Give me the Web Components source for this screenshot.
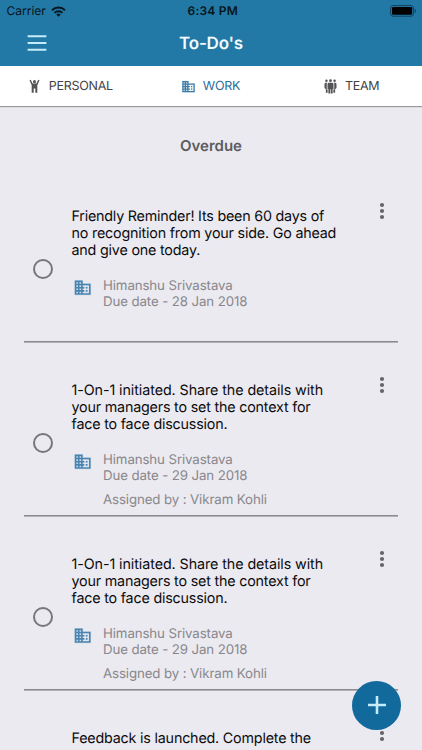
<!DOCTYPE html>
<html lang="en">
<head>
<meta charset="UTF-8">
<meta name="viewport" content="width=device-width, initial-scale=1">
<title>To-Do's</title>
<style>
    html, body {
        margin: 0;
        height: 100%;
        overflow: hidden;
    }
    body {
        font-family: Inter, "Liberation Sans", sans-serif;
        text-rendering: geometricPrecision;
        background: #ebeaf0;
    }
</style>
</head>
<body>
<todo-app></todo-app>

<script>
const todos = [
    { lines: ["Friendly Reminder! Its been 60 days of", "no recognition from your side. Go ahead", "and give one today."], tracking: "-0.21px", owner: "Himanshu Srivastava", due: "28 Jan 2018" },
    { lines: ["1-On-1 initiated. Share the details with", "your managers to set the context for", "face to face discussion."], tracking: "-0.08px", owner: "Himanshu Srivastava", due: "29 Jan 2018", by: "Vikram Kohli" },
    { lines: ["1-On-1 initiated. Share the details with", "your managers to set the context for", "face to face discussion."], tracking: "-0.08px", owner: "Himanshu Srivastava", due: "29 Jan 2018", by: "Vikram Kohli" },
    { lines: ["Feedback is launched. Complete the"], tracking: "-0.19px" }
];

const icons = {
    work: `<path stroke="currentColor" stroke-width="0.2" d="M12 7V3H2v18h20V7H12zM6 19H4v-2h2v2zm0-4H4v-2h2v2zm0-4H4V9h2v2zm0-4H4V5h2v2zm4 12H8v-2h2v2zm0-4H8v-2h2v2zm0-4H8V9h2v2zm0-4H8V5h2v2zm10 12h-8v-2h2v-2h-2v-2h2v-2h-2V9h8v10zm-2-8h-2v2h2v-2zm0 4h-2v2h2v-2z"/>`,
    personal: `<circle cx="12" cy="4.2" r="2.4"/><path d="M4 2 6 1 9 7h6l3-6 2 1-3.5 7.8V22h-3.2v-7h-2.600v7H7.500V9.800z"/>`,
    team: `<circle cx="5.5" cy="2.8" r="2"/><circle cx="12" cy="2.6" r="2.2"/><circle cx="18.5" cy="2.8" r="2"/><path d="M8.6 5.8h6.8l1.400 1.600v8.400h-1.400V23h-2.900v-6.500h-1V23H8.600v-7.200H7.200V7.400zM3.800 5.800h3L6 7.400v9.200h1.400V22H4.600v-5.500L2.400 14.500V7.400zM20.200 5.800h-3l.8 1.600v9.200h-1.400V22h2.800v-5.500l2.200-2V7.400z"/>`,
    menu: `<path d="M3 4.5h18v2H3zm0 6.500h18v2H3zm0 6.500h18v2H3z"/>`,
    more: `<circle cx="12" cy="4.8" r="2.5"/><circle cx="12" cy="12" r="2.5"/><circle cx="12" cy="19.2" r="2.5"/>`,
    add: `<path d="M10.7 3h2.600v7.700H21v2.600h-7.700V21h-2.600v-7.700H3v-2.600h7.700z"/>`
};

class AppIcon extends HTMLElement {
    connectedCallback() {
        this.attachShadow({ mode: 'open' }).innerHTML = `
            <style>
                :host {
                    display: block;
                    flex: none;
                    width: var(--size, 20px);
                    height: var(--size, 20px);
                }
                svg {
                    display: block;
                    width: 100%;
                    height: 100%;
                    fill: currentColor;
                }
            </style>
            <svg viewBox="0 0 24 24">${icons[this.getAttribute('name')]}</svg>
        `;
    }
}

class StatusBar extends HTMLElement {
    connectedCallback() {
        this.attachShadow({ mode: 'open' }).innerHTML = `
            <style>
                :host {
                    display: grid;
                    grid-template-columns: 1fr auto 1fr;
                    align-items: center;
                    height: 22px;
                    padding: 0 5px 0 6.5px;
                    font-size: 12px;
                    line-height: 22px;
                    color: #06141c;
                }
                .left { display: flex; align-items: center; gap: 5px; }
                .time { font-weight: 600; letter-spacing: 0.2px; transform: translateX(1px); }
                .battery { justify-self: end; margin-top: -1px; }
                svg { display: block; }
            </style>
            <div class="left">
                <span>Carrier</span>
                <svg width="15" height="11" viewBox="0 0 15 11">
                    <g fill="none" stroke="#06141c" stroke-width="2">
                        <path d="M1 4.2a9.3 9.3 0 0 1 13 0"/>
                        <path d="M3.5 6.9a5.7 5.7 0 0 1 8 0"/>
                    </g>
                    <path fill="#06141c" d="M5.3 8.5a3.1 3.1 0 0 1 4.4 0L7.5 10.8z"/>
                </svg>
            </div>
            <span class="time">6:34 PM</span>
            <svg class="battery" width="27" height="12" viewBox="0 0 27 12">
                <rect x="0.6" y="0.6" width="23" height="10.6" rx="2.5" fill="none" stroke="#0d435e"/>
                <rect x="2" y="2" width="20.2" height="7.8" rx="1.2" fill="#000"/>
                <path d="M24.8 4v4a2.2 2.2 0 0 0 0-4z" fill="#0d435e"/>
            </svg>
        `;
    }
}

class AppHeader extends HTMLElement {
    connectedCallback() {
        this.attachShadow({ mode: 'open' }).innerHTML = `
            <style>
                :host {
                    display: block;
                    height: 66px;
                    background: #2279a6;
                }
                .bar {
                    display: grid;
                    grid-template-columns: 1fr auto 1fr;
                    align-items: center;
                    height: 42px;
                    padding: 0 24.5px;
                }
                app-icon { --size: 25px; color: #c5ecf9; transform: translate(-0.5px, -0.5px); }
                h1 {
                    margin: 2px 0 0;
                    font-size: 17px;
                    font-weight: 600;
                    letter-spacing: -0.2px;
                    color: #f4fbff;
                }
            </style>
            <status-bar></status-bar>
            <div class="bar">
                <app-icon name="menu"></app-icon>
                <h1><slot></slot></h1>
            </div>
        `;
    }
}

class TabBar extends HTMLElement {
    connectedCallback() {
        this.attachShadow({ mode: 'open' }).innerHTML = `
            <style>
                :host {
                    display: grid;
                    grid-template-columns: repeat(3, 1fr);
                    box-sizing: border-box;
                    height: 40px;
                    background: #fff;
                    box-shadow: 0 1px 1px rgba(0, 0, 0, 0.35);
                    clip-path: inset(0 0 -2px 0);
                }
            </style>
            <slot></slot>
        `;
    }
}

class TabItem extends HTMLElement {
    connectedCallback() {
        this.attachShadow({ mode: 'open' }).innerHTML = `
            <style>
                :host {
                    display: flex;
                    align-items: center;
                    justify-content: center;
                    gap: 7px;
                    font-size: 12.5px;
                    letter-spacing: -0.25px;
                    color: #424244;
                }
                :host([active]) { color: #2a6f9e; }
                app-icon { --size: 15px; opacity: 0.9; }
                span { margin: 1px 1px 0 0; }
            </style>
            <app-icon name="${this.getAttribute('icon')}"></app-icon>
            <span><slot></slot></span>
        `;
    }
}

class TodoItem extends HTMLElement {
    set data(todo) {
        this.attachShadow({ mode: 'open' }).innerHTML = `
            <style>
                :host {
                    display: grid;
                    grid-template-columns: 47.5px 1fr 33px;
                    box-sizing: border-box;
                    height: 174px;
                    margin: 0 24px;
                    box-shadow: inset 0 -1px #8b8a90, 0 0.6px #8b8a90;
                }
                .check {
                    box-sizing: border-box;
                    width: 20px;
                    height: 20px;
                    margin: 91px 0 0 9px;
                    border: 2px solid #77767b;
                    border-radius: 50%;
                }
                .title {
                    margin-top: 39.5px;
                    font-size: 14.3px;
                    line-height: 17.2px;
                    letter-spacing: -0.19px;
                    color: #0b0b0d;
                    white-space: nowrap;
                }
                .title div { height: 17.2px; }
                .title div:first-child { letter-spacing: ${todo.tracking}; }
                .meta {
                    display: flex;
                    gap: 11px;
                    margin: 20.2px 0 0 1.5px;
                    font-size: 13.3px;
                    line-height: 15.5px;
                    letter-spacing: -0.12px;
                    color: #88878c;
                    white-space: nowrap;
                }
                .meta app-icon { --size: 19px; color: #4a86b2; transform: translate(0.2px, -0.8px); }
                .by { margin-top: 9px; }
                .more { --size: 20px; color: #666569; margin: 33px 0 0 7px; }
            </style>
            <div class="check"></div>
            <div>
                <div class="title">${todo.lines.map(line => `<div>${line}</div>`).join('')}</div>
                ${todo.owner ? `
                <div class="meta">
                    <app-icon name="work"></app-icon>
                    <div>
                        <div>${todo.owner}</div>
                        <div>Due date - ${todo.due}</div>
                        ${todo.by ? `<div class="by">Assigned by : ${todo.by}</div>` : ''}
                    </div>
                </div>` : ''}
            </div>
            <app-icon class="more" name="more"></app-icon>
        `;
    }
}

class TodoApp extends HTMLElement {
    connectedCallback() {
        this.attachShadow({ mode: 'open' }).innerHTML = `
            <style>
                :host {
                    display: flex;
                    flex-direction: column;
                    position: relative;
                    height: 100vh;
                    overflow: hidden;
                }
                app-header, tab-bar, h2, todo-item { flex: none; }
                h2 {
                    height: 62px;
                    margin: 0;
                    font-size: 15px;
                    font-weight: 600;
                    line-height: 80px;
                    text-align: center;
                    color: #5c5b60;
                }
                .fab {
                    position: absolute;
                    right: 21px;
                    bottom: 20.5px;
                    display: flex;
                    align-items: center;
                    justify-content: center;
                    width: 49px;
                    height: 49px;
                    padding: 0;
                    border: none;
                    border-radius: 50%;
                    background: #12699c;
                    color: #c5ecf9;
                }
                .fab app-icon { --size: 24px; }
            </style>
            <app-header>To-Do's</app-header>
            <tab-bar>
                <tab-item icon="personal">PERSONAL</tab-item>
                <tab-item icon="work" active>WORK</tab-item>
                <tab-item icon="team">TEAM</tab-item>
            </tab-bar>
            <h2>Overdue</h2>
            <button class="fab" aria-label="Add"><app-icon name="add"></app-icon></button>
        `;
        const fab = this.shadowRoot.querySelector('.fab');
        todos.forEach(todo => {
            const item = document.createElement('todo-item');
            item.data = todo;
            fab.before(item);
        });
    }
}

customElements.define('app-icon', AppIcon);
customElements.define('status-bar', StatusBar);
customElements.define('app-header', AppHeader);
customElements.define('tab-bar', TabBar);
customElements.define('tab-item', TabItem);
customElements.define('todo-item', TodoItem);
customElements.define('todo-app', TodoApp);
</script>
</body>
</html>
